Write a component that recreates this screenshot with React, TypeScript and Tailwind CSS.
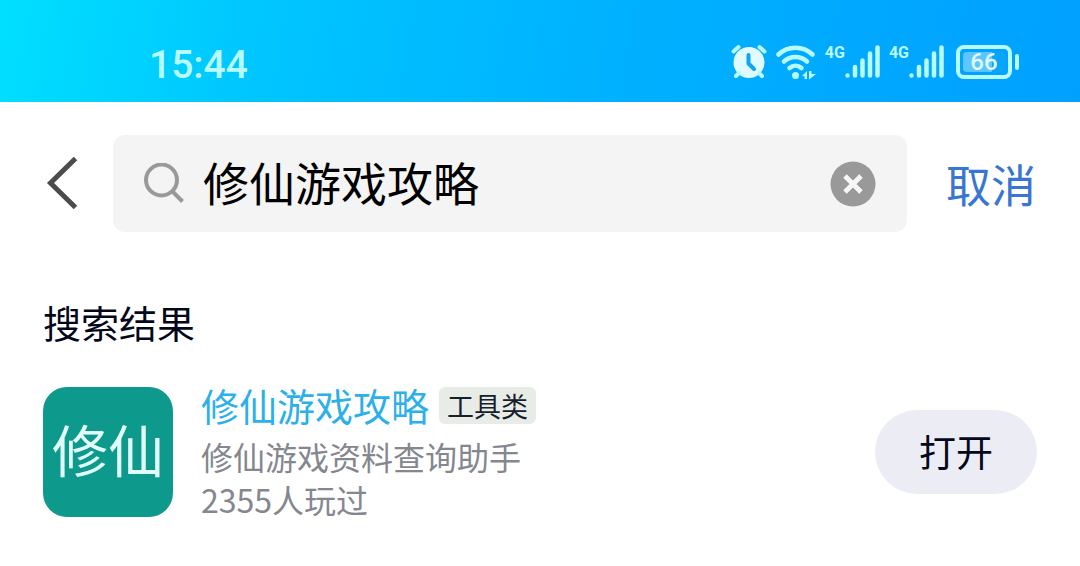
import React, { useState } from 'react';

const AlarmIcon = () => (
    <svg width="36" height="36" viewBox="0 0 36 36" fill="none" aria-hidden="true">
        <circle cx="18" cy="18.500" r="15.500" fill="#dffbff" />
        <path d="M2.500 7.500L7.500 3M33.500 7.500L28.500 3" stroke="#b8fbff" strokeWidth="4" strokeLinecap="round" />
        <path d="M8 29L5 32M28 29L31 32" stroke="#b8fbff" strokeWidth="4" strokeLinecap="round" />
        <path d="M17.500 11V19.500L23 25" stroke="#0da6f2" strokeWidth="4" strokeLinecap="round" strokeLinejoin="round" />
    </svg>
);

const WifiIcon = () => (
    <svg width="40" height="36" viewBox="0 0 40 36" fill="none" aria-hidden="true">
        <g stroke="#b8fbff" strokeWidth="4.500" strokeLinecap="round">
            <path d="M2.500 10.500C12 1.500 27 1.500 36.500 10.500" />
            <path d="M8 17.500C14.500 11.500 24.500 11.500 31 17.500" />
            <path d="M13.500 24C17 21 22 21 25.500 24" />
        </g>
        <circle cx="19.500" cy="31.500" r="3.500" fill="#b8fbff" />
        <path d="M26 32L31 27V35H28.500V32ZM33 27H35.500V30H40L33 35.500Z" fill="#b8fbff" />
    </svg>
);

const Signal = () => (
    <div className="flex">
        <span className="h-9 font-['Roboto',sans-serif] text-[16px] leading-[18px] font-bold">4G</span>
        <svg width="35" height="36" viewBox="0 0 35 36" fill="none" aria-hidden="true">
            <path
                d="M2.500 31.500V31.600M10 31.500V23M17.500 31.500V16.500M25 31.500V9.500M32.500 31.500V3.500"
                stroke="#b8fbff"
                strokeWidth="4.500"
                strokeLinecap="round"
            />
        </svg>
    </div>
);

const Battery = () => (
    <div className="flex items-center gap-[3px] pl-[3px]">
        <div className="flex h-[34px] w-14 rounded-lg border-4 border-[#b8fbff] p-[3px]">
            <div className="flex flex-1 items-center justify-center rounded-sm bg-linear-to-r from-[#5fc5ff] from-70% to-[#08a5fa] to-70% font-['Roboto',sans-serif] text-[24px] leading-none font-medium text-[#dffbff]">
                66
            </div>
        </div>
        <div className="h-4 w-1 rounded-full bg-[#b8fbff]" />
    </div>
);

const StatusBar = () => (
    <div className="flex h-[102px] items-end justify-between bg-linear-[100deg,#00dfff_0%,#00c5ff_25%,#00b2ff_55%,#00a0ff_100%] pr-[61px] pb-[17px] pl-[149px] text-[#b8fbff]">
        <span className="font-['Roboto',sans-serif] text-[39px] leading-10 font-medium">15:44</span>
        <div className="flex items-center gap-[9px] pb-[5px]">
            <AlarmIcon />
            <WifiIcon />
            <Signal />
            <Signal />
            <Battery />
        </div>
    </div>
);

interface SearchBarProps {
    query: string;
    setQuery: (query: string) => void;
}

const SearchBar: React.FC<SearchBarProps> = ({ query, setQuery }) => (
    <form className="flex items-center pt-[33px] pr-11 pl-[46px]" onSubmit={(e) => e.preventDefault()}>
        <button type="button" aria-label="返回" className="mr-[35px] shrink-0">
            <svg width="32" height="54" viewBox="0 0 32 54" fill="none">
                <path d="M29.500 1.500L4.500 26L29.500 50.500" stroke="#4c4c4c" strokeWidth="5" />
            </svg>
        </button>
        <div className="flex h-[97px] min-w-0 flex-1 items-center rounded-xl bg-[#f4f4f4] pr-[31px] pl-[30px]">
            <svg className="shrink-0" width="42" height="42" viewBox="0 0 42 42" fill="none" aria-hidden="true">
                <circle cx="18.500" cy="17" r="15.500" stroke="#999" strokeWidth="4" />
                <path d="M29 28L39.500 38.500" stroke="#999" strokeWidth="4" />
            </svg>
            <input
                type="text"
                aria-label="搜索"
                value={query}
                onChange={(e) => setQuery(e.target.value)}
                className="ml-[18px] h-16 min-w-0 flex-1 bg-transparent pb-1 text-[46px] text-black outline-none"
            />
            <button type="button" aria-label="清除" onClick={() => setQuery('')} className="shrink-0">
                <svg width="46" height="46" viewBox="0 0 46 46" fill="none">
                    <circle cx="23" cy="23" r="22.500" fill="#999" />
                    <path d="M15 15L31 31M31 15L15 31" stroke="#f6f6f6" strokeWidth="5" />
                </svg>
            </button>
        </div>
        <button type="button" className="ml-[39px] shrink-0 text-[45px] leading-none text-[#3975d2]">
            取消
        </button>
    </form>
);

const ResultItem = () => (
    <li className="flex items-center">
        <div className="flex size-[130px] shrink-0 items-center justify-center rounded-3xl bg-[#0d998c] pb-2 font-['KaiTi','Noto_Sans_CJK_SC',serif] text-[56px] leading-none text-[#e3fffb]">
            修仙
        </div>
        <div className="ml-7 min-w-0 flex-1">
            <div className="mb-2 flex items-center gap-[10px]">
                <h3 className="text-[38px] leading-[44px] text-[#2cb0e9]">修仙游戏攻略</h3>
                <span className="rounded-md bg-[#e8ece7] px-2 text-[27px] leading-[37px] text-[#16202b]">工具类</span>
            </div>
            <p className="text-[32px] leading-[43px] text-[#85878f]">修仙游戏资料查询助手</p>
            <p className="text-[32px] leading-[43px] text-[#85878f]">2355人玩过</p>
        </div>
        <button type="button" className="h-[84px] w-[162px] shrink-0 rounded-full bg-[#ecedf4] text-[37px] text-[#03081a]">
            打开
        </button>
    </li>
);

const App: React.FC = () => {
    const [query, setQuery] = useState('修仙游戏攻略');

    return (
        <div className="min-h-screen bg-white font-['Noto_Sans_CJK_SC',sans-serif]" lang="zh-CN">
            <StatusBar />
            <SearchBar query={query} setQuery={setQuery} />
            <main className="px-[43px] pt-[65px]">
                <h2 className="text-[38px] leading-[50px] text-[#03081a]">搜索结果</h2>
                <ul className="mt-9">
                    <ResultItem />
                </ul>
            </main>
        </div>
    );
};

export default App;
